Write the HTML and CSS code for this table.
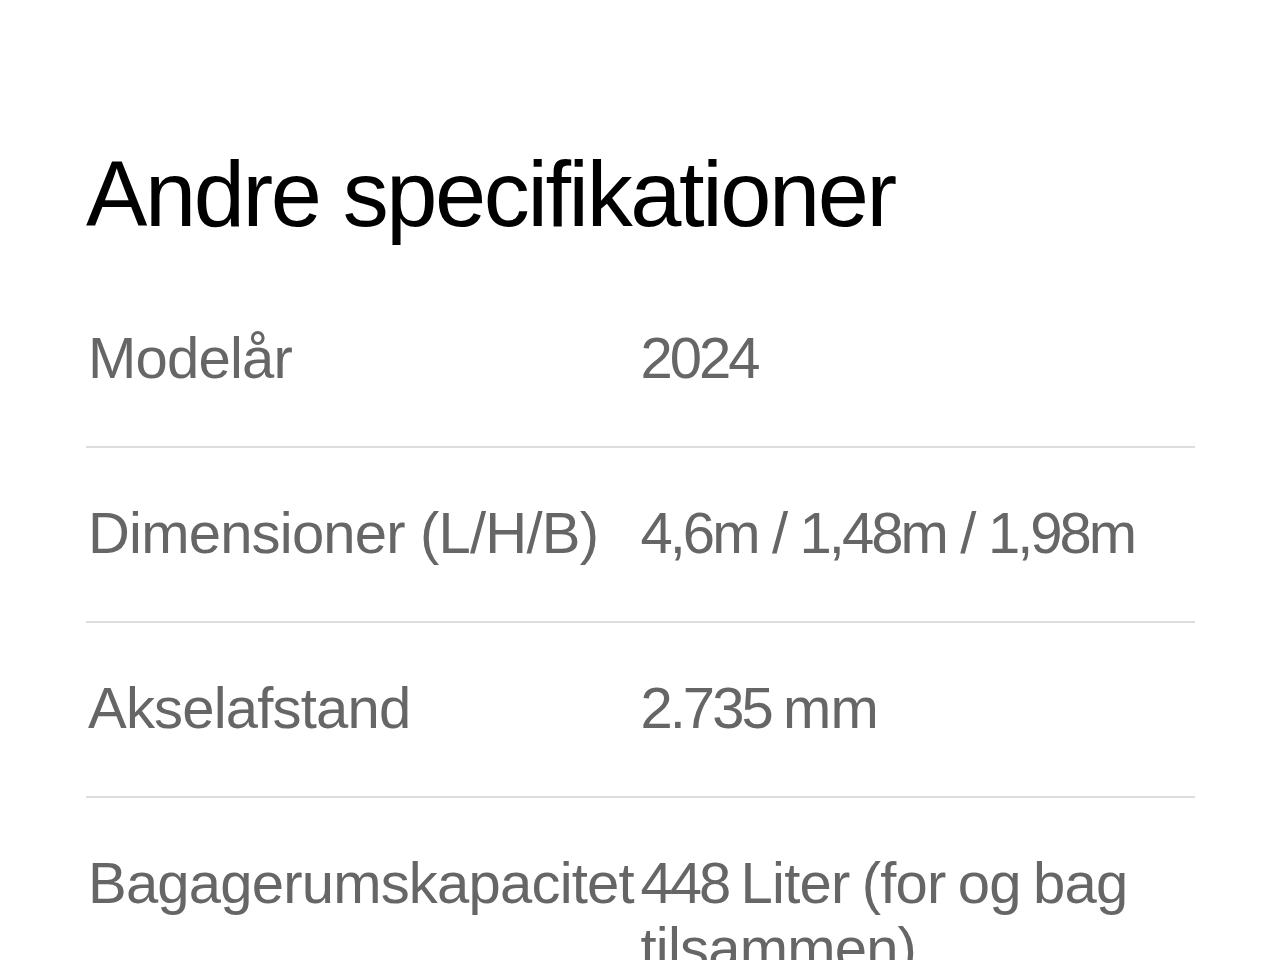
FILE: index.html
```html
<!DOCTYPE html>
<html lang="da">
<head>
<meta charset="utf-8">
<title>Andre specifikationer</title>
<link rel="stylesheet" href="styles.css">
</head>
<body>
<main class="specs">
  <h1 class="specs-title">Andre specifikationer</h1>
  <dl class="spec-list">
    <div class="spec-row">
      <dt class="spec-label">Modelår</dt>
      <dd class="spec-value"><span class="num">2024</span></dd>
    </div>
    <div class="spec-row">
      <dt class="spec-label">Dimensioner (L/H/B)</dt>
      <dd class="spec-value"><span class="num">4,6</span>m / <span class="num">1,48</span>m / <span class="num">1,98</span>m</dd>
    </div>
    <div class="spec-row">
      <dt class="spec-label">Akselafstand</dt>
      <dd class="spec-value"><span class="num">2.735</span> mm</dd>
    </div>
    <div class="spec-row">
      <dt class="spec-label">Bagagerumskapacitet</dt>
      <dd class="spec-value"><span class="num">448</span> Liter (for og bag tilsammen)</dd>
    </div>
  </dl>
</main>
</body>
</html>
```

FILE: styles.css
```css
html, body {
  margin: 0;
  padding: 0;
  background: #ffffff;
}

body {
  font-family: "Liberation Sans", Arial, sans-serif;
  -webkit-font-smoothing: antialiased;
}

.specs {
  padding: 144px 85px 0 86px;
}

.specs-title {
  margin: 0;
  font-size: 92px;
  font-weight: 400;
  line-height: 1.1;
  letter-spacing: -2.4px;
  color: #000000;
}

.spec-list {
  margin: 28px 0 0;
  padding: 0;
}

.spec-row {
  display: grid;
  grid-template-columns: 1fr 1fr;
  padding: 52px 0 56px;
  border-bottom: 2px solid #dddddd;
}

.spec-row:last-child {
  border-bottom: none;
}

.spec-label,
.spec-value {
  margin: 0;
  font-size: 58px;
  line-height: 65px;
  letter-spacing: -0.8px;
  color: #666666;
}

.spec-label {
  padding-left: 2px;
  white-space: nowrap;
}

.spec-value {
  word-spacing: -3px;
}

.num {
  letter-spacing: -3px;
}
```
